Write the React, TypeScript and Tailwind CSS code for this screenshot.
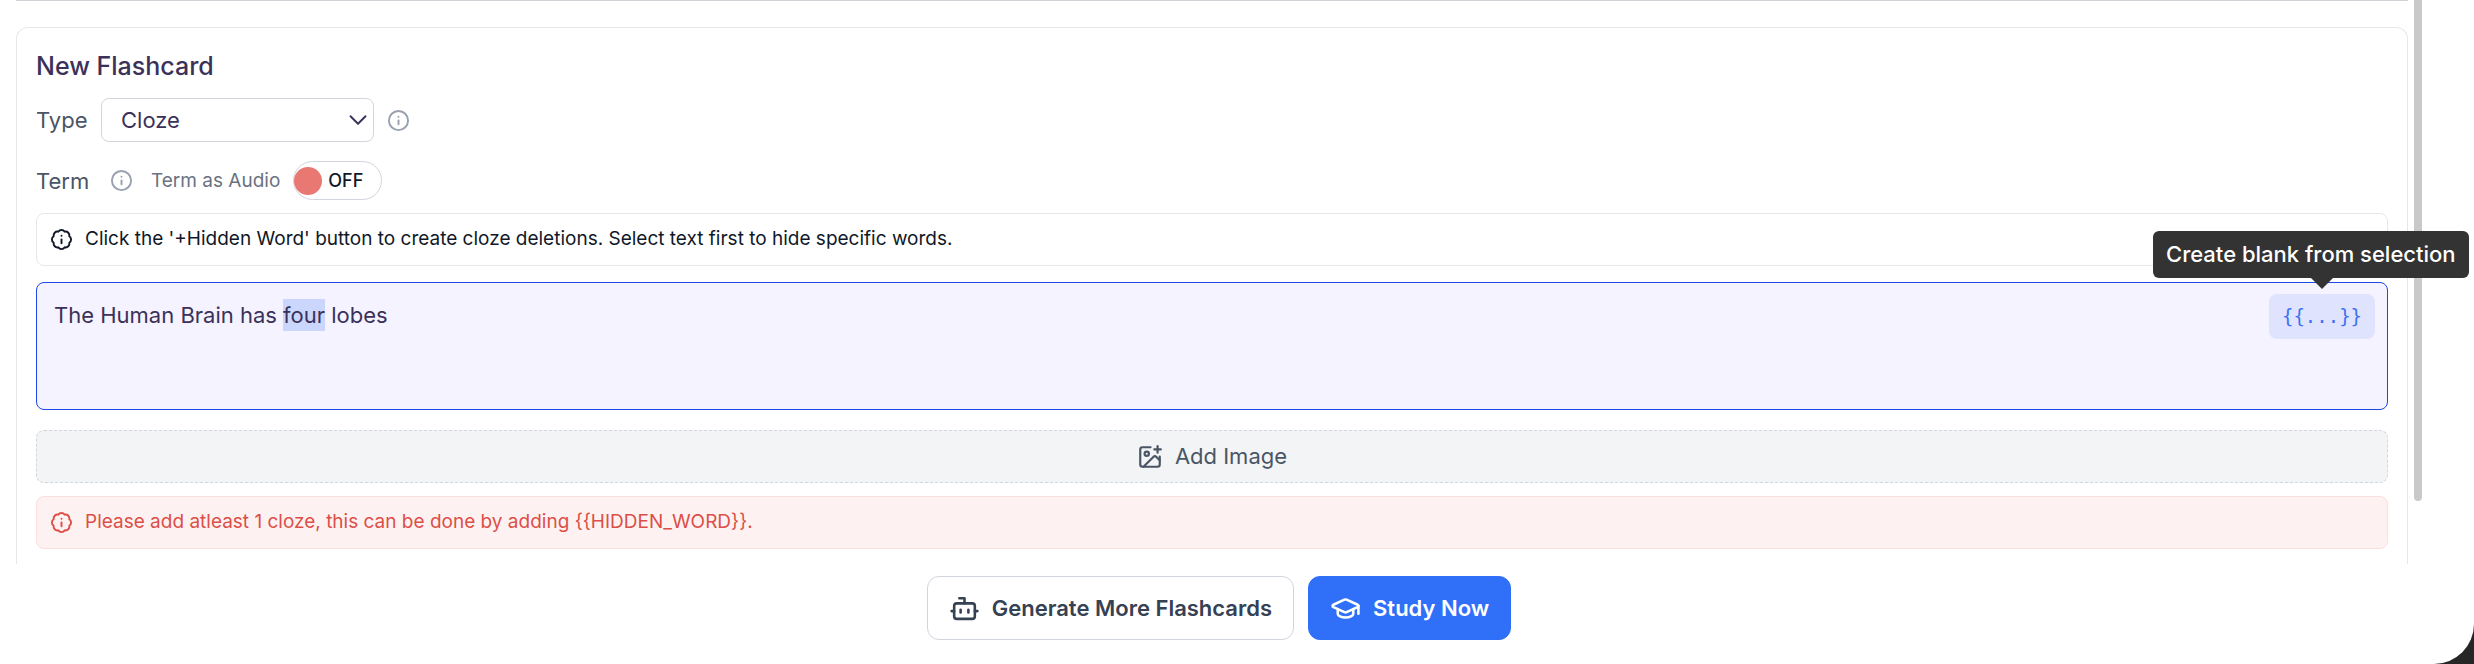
import { useEffect, useRef, useState } from "react";
import { BadgeInfo, Bot, ChevronDown, GraduationCap, ImagePlus, Info } from "lucide-react";

const CARD_TYPES = ["Cloze", "Basic", "Multiple Choice"];

export default function App() {
  const termRef = useRef<HTMLTextAreaElement>(null);
  const [type, setType] = useState("Cloze");
  const [term, setTerm] = useState("The Human Brain has four lobes");
  const [termAudio, setTermAudio] = useState(false);

  useEffect(() => {
    const start = term.indexOf("four");
    termRef.current?.focus({ preventScroll: true });
    termRef.current?.setSelectionRange(start, start + 4);
  }, []);

  const createBlank = () => {
    const el = termRef.current;
    if (!el || el.selectionStart === el.selectionEnd) return;
    const { selectionStart: start, selectionEnd: end } = el;
    setTerm(`${term.slice(0, start)}{{${term.slice(start, end)}}}${term.slice(end)}`);
  };

  return (
    <div className="bg-[#262626] font-['Inter',sans-serif]">
      <main className="flex h-screen flex-col overflow-hidden rounded-br-[40px] bg-white">
        {/* Scroll area */}
        <div className="flex min-h-0 flex-1 items-start overflow-hidden pr-[52px] pl-4">
          <div className="min-w-0 flex-1">
            <hr className="border-[#d1d1d8]" />
            <section className="mt-[26px] rounded-t-xl border border-b-0 border-gray-200 px-[19px] pt-5 pb-10">
              <h2 className="text-[25px] leading-9 font-medium text-[#3b3159]">
                New Flashcard
              </h2>

              {/* Type */}
              <div className="mt-[14px] flex items-center">
                <label htmlFor="type" className="w-[65px] text-[22px] leading-8 text-gray-600">
                  Type
                </label>
                <div className="relative">
                  <select
                    id="type"
                    value={type}
                    onChange={(e) => setType(e.target.value)}
                    className="h-11 w-[273px] appearance-none rounded-lg border border-gray-300 bg-white px-[19px] text-[22px] text-[#3b3159] outline-none"
                  >
                    {CARD_TYPES.map((t) => (
                      <option key={t}>{t}</option>
                    ))}
                  </select>
                  <ChevronDown
                    size={30}
                    strokeWidth={1.5}
                    className="pointer-events-none absolute top-[7px] right-px text-[#3b3159]"
                  />
                </div>
                <Info size={23} strokeWidth={2} className="ml-[13px] text-gray-400" />
              </div>

              {/* Term */}
              <div className="mt-[19px] flex items-center">
                <label htmlFor="term" className="w-[74px] text-[22px] leading-8 text-gray-600">
                  Term
                </label>
                <Info size={23} strokeWidth={2} className="text-gray-400" />
                <label htmlFor="audio" className="ml-[18px] text-[19px] leading-8 text-gray-500">
                  Term as Audio
                </label>
                <button
                  id="audio"
                  type="button"
                  role="switch"
                  aria-checked={termAudio}
                  onClick={() => setTermAudio(!termAudio)}
                  className="ml-[13px] flex h-[39px] w-[89px] items-center gap-[6px] rounded-full border border-gray-300 text-[18px] font-medium text-gray-900"
                >
                  <span className="size-7 rounded-full bg-[#e97872]" />
                  {termAudio ? "ON" : "OFF"}
                </button>
              </div>

              <div className="mt-[13px] flex h-[53px] items-center gap-3 rounded-lg border border-gray-200 px-[13px] text-[19px] text-gray-900">
                <BadgeInfo size={23} strokeWidth={2} />
                Click the '+Hidden Word' button to create cloze deletions. Select text first to
                hide specific words.
              </div>

              <div className="relative mt-4">
                <textarea
                  id="term"
                  ref={termRef}
                  value={term}
                  spellCheck={false}
                  onChange={(e) => setTerm(e.target.value)}
                  className="block h-32 w-full resize-none rounded-lg border border-[#1d48e5] bg-[#f5f3ff] py-4 pr-32 pl-[17px] text-[22px] leading-8 text-[#3b3159] outline-none selection:bg-[#cbd6fd] selection:text-[#3b3159]"
                />
                <div className="absolute top-3 right-[13px]">
                  <button
                    type="button"
                    onClick={createBlank}
                    aria-describedby="blank-tip"
                    className="h-[45px] w-[106px] rounded-lg bg-[#dfe3fd] font-['DejaVu_Sans_Mono',monospace] text-[19px] text-[#3b72f0]"
                  >
                    {"{{...}}"}
                  </button>
                  <div
                    id="blank-tip"
                    role="tooltip"
                    className="absolute bottom-[61px] left-1/2 flex h-[47px] -translate-x-[169px] items-center rounded-md bg-[#333333] px-[13px] text-[22px] font-medium whitespace-nowrap text-white"
                  >
                    Create blank from selection
                  </div>
                  <span className="absolute bottom-[39px] left-1/2 -translate-x-1/2 border-[11px] border-transparent border-t-[#333333]" />
                </div>
              </div>

              <button
                type="button"
                className="mt-5 flex h-[53px] w-full items-center justify-center gap-3 rounded-lg border border-dashed border-gray-300 bg-gray-100 text-[22px] text-gray-600"
              >
                <ImagePlus size={26} strokeWidth={2} />
                Add Image
              </button>

              <div
                role="alert"
                className="mt-[13px] flex h-[53px] items-center gap-3 rounded-lg border border-[#fbdfdf] bg-[#fdf2f1] px-[13px] text-[19px] text-[#dc4f48]"
              >
                <BadgeInfo size={23} strokeWidth={2} />
                {"Please add atleast 1 cloze, this can be done by adding {{HIDDEN_WORD}}."}
              </div>
            </section>
          </div>

          {/* Scrollbar */}
          <div className="ml-[6px] h-[501px] w-2 shrink-0 rounded-b-full bg-[#c9c9c9]" />
        </div>

        {/* Actions */}
        <div className="flex h-[100px] shrink-0 items-start justify-center gap-[14px] pt-3 pr-9">
          <button
            type="button"
            className="flex h-16 items-center gap-3 rounded-xl border border-gray-300 px-[21px] text-[22px] font-semibold text-gray-700"
          >
            <Bot size={31} strokeWidth={2} />
            Generate More Flashcards
          </button>
          <button
            type="button"
            className="flex h-16 items-center gap-3 rounded-xl border border-[#306ff8] bg-[#306ff8] px-[21px] text-[22px] font-semibold text-white"
          >
            <GraduationCap size={31} strokeWidth={2} />
            Study Now
          </button>
        </div>
      </main>
    </div>
  );
}
